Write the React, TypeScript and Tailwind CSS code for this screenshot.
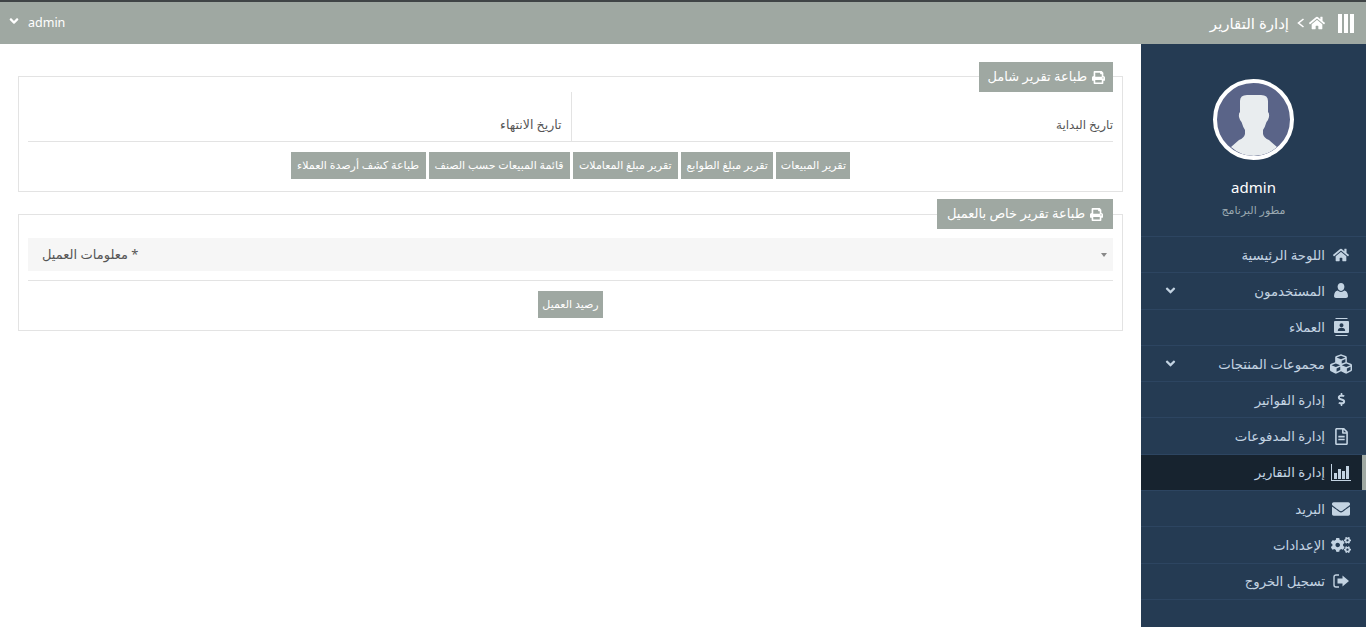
import { FaHome, FaCubes, FaDollarSign, FaRegFileAlt, FaEnvelope, FaCogs, FaPrint, FaAngleDown } from "react-icons/fa";

function UserIcon() {
  return (
    <svg viewBox="0 0 14 15" className="h-[15px] w-[14px]" fill="currentColor">
      <path d="M7 0c2 0 3.400 1.600 3.400 3.800S9 8 7 8 3.600 6 3.600 3.800 5 0 7 0z" />
      <path d="M3.800 7.600C4.600 8.500 5.700 9 7 9s2.400-.5 3.200-1.400c2.200.3 3.600 2 3.800 5.400 0 1.300-.8 2-2 2H2c-1.200 0-2-.7-2-2 .2-3.400 1.600-5.100 3.800-5.400z" />
    </svg>
  );
}

function ContactIcon() {
  return (
    <svg viewBox="0 0 15 18" className="h-[18px] w-[15px]" fill="currentColor">
      <rect x="1.500" y="0" width="12" height="1" />
      <rect x="1.500" y="17" width="12" height="1" />
      <path d="M1 3h13a1 1 0 0 1 1 1v10a1 1 0 0 1-1 1H1a1 1 0 0 1-1-1V4a1 1 0 0 1 1-1zm6.500 2.200a2 2 0 1 0 0 4 2 2 0 0 0 0-4zM3.800 13h7.400c0-2-1.400-3.200-3.700-3.200S3.800 11 3.800 13z" fillRule="evenodd" />
    </svg>
  );
}

function ChartIcon() {
  return (
    <svg viewBox="0 0 20 17" className="h-[17px] w-[20px]" fill="currentColor">
      <rect x="0" y="0" width="1" height="17" />
      <rect x="0" y="16" width="20" height="1" />
      <rect x="3" y="9" width="3" height="6" />
      <rect x="7" y="5" width="3" height="10" />
      <rect x="11" y="7" width="3" height="8" />
      <rect x="15" y="2" width="3" height="13" />
    </svg>
  );
}

function LogoutIcon() {
  return (
    <svg viewBox="0 0 16 14" className="h-[14px] w-[16px]" fill="currentColor">
      <path d="M6 1H3a2 2 0 0 0-2 2v8a2 2 0 0 0 2 2h3" fill="none" stroke="currentColor" strokeWidth="1.400" />
      <path d="M9.500 1.500 16 7l-6.500 5.500V9.500H4.500v-5h5z" />
    </svg>
  );
}

function BarsIcon() {
  return (
    <div className="flex h-[19px] gap-[2px]">
      <span className="w-[4px] bg-white" />
      <span className="w-[4px] bg-white" />
      <span className="w-[4px] bg-white" />
    </div>
  );
}

function CrumbArrow() {
  return (
    <svg viewBox="0 0 8 10" className="mr-[4px] h-[10px] w-[8px]" fill="none" stroke="currentColor" strokeWidth="1.600">
      <path d="M6.500 1 1.500 5 6.500 9" />
    </svg>
  );
}

const menu = [
  { label: "اللوحة الرئيسية", icon: <FaHome size={16} /> },
  { label: "المستخدمون", icon: <UserIcon />, arrow: true },
  { label: "العملاء", icon: <ContactIcon /> },
  { label: "مجموعات المنتجات", icon: <FaCubes size={22} />, arrow: true },
  { label: "إدارة الفواتير", icon: <FaDollarSign size={13} /> },
  { label: "إدارة المدفوعات", icon: <FaRegFileAlt size={17} /> },
  { label: "إدارة التقارير", icon: <ChartIcon />, active: true },
  { label: "البريد", icon: <FaEnvelope size={18} /> },
  { label: "الإعدادات", icon: <FaCogs size={20} /> },
  { label: "تسجيل الخروج", icon: <LogoutIcon /> },
];

const reportButtons = [
  { label: "تقرير المبيعات", padding: "px-[4.500px]" },
  { label: "تقرير مبلغ الطوابع", padding: "px-[5.500px]" },
  { label: "تقرير مبلغ المعاملات", padding: "px-[6.500px]" },
  { label: "قائمة المبيعات حسب الصنف", padding: "px-[6px]" },
  { label: "طباعة كشف أرصدة العملاء", padding: "px-[6.500px]" },
];

function Legend({ title, className }: { title: string; className: string }) {
  return (
    <div className={`mr-[9px] flex h-[30px] w-fit items-center gap-[5px] bg-[#9fa8a2] text-[13px] text-white ${className}`}>
      <FaPrint size={13} />
      <span>{title}</span>
    </div>
  );
}

function ActionButton({ label, padding }: { label: string; padding: string }) {
  return <button className={`h-[27px] bg-[#9fa8a2] text-[11px] whitespace-nowrap text-white ${padding}`}>{label}</button>;
}

function Avatar() {
  return (
    <div className="h-[81px] w-[81px] overflow-hidden rounded-full border-[4px] border-white bg-[#5a6488]">
      <svg viewBox="0 0 73 73" className="h-full w-full">
        <path
          d="M23 18Q23 12 30 12H44Q51 12 51 18V29Q52.500 30 52 34Q51 38 49.500 39Q48 44 46 47V51Q47 55 52 57L60 64Q50 73 37 73Q24 73 14 64L22 57Q27 55 28 51V47Q26 44 24.500 39Q23 38 22 34Q21.500 30 23 29Z"
          fill="#e9edef"
        />
      </svg>
    </div>
  );
}

export default function App() {
  return (
    <div dir="rtl" className="flex h-screen flex-col overflow-hidden bg-white font-['Noto_Sans','DejaVu_Sans',sans-serif]">
      {/* Top bar */}
      <header className="flex h-[44px] shrink-0 items-center justify-between border-t-2 border-[#3f4446] bg-[#9fa8a2] pr-[12px] pl-[7px] text-white">
        <div className="flex items-center">
          <BarsIcon />
          <span className="mr-[13px]">
            <FaHome size={16} />
          </span>
          <CrumbArrow />
          <span className="mr-[8px] text-[15px]">إدارة التقارير</span>
        </div>
        <div className="flex items-center gap-[7px] text-[12.500px]">
          <span>admin</span>
          <FaAngleDown size={14} className="-mt-[5px]" />
        </div>
      </header>

      <div className="flex min-h-0 flex-1">
        {/* Sidebar */}
        <aside className="w-[225px] shrink-0 bg-[#253b53]">
          <div className="flex h-[193px] flex-col items-center border-b border-[#2d4561] pt-[35px]">
            <Avatar />
            <div className="mt-[17px] text-[15px] leading-5 text-white">admin</div>
            <div className="mt-[3px] text-[11px] leading-5 text-[#9aa8b0]">مطور البرنامج</div>
          </div>
          <nav>
            {menu.map((item) => (
              <div
                key={item.label}
                className={`relative flex h-[36.300px] items-center border-b border-[#2d4561] pr-[12px] pl-[22px] text-[13.300px] text-[#c3d3e2] ${item.active ? "bg-[#17232f]" : ""}`}
              >
                <span className="flex w-[26px] shrink-0 justify-center">{item.icon}</span>
                <span className="mr-[3px] pt-[2px]">{item.label}</span>
                {item.arrow && <FaAngleDown size={15} className="mr-auto" />}
                {item.active && <span className="absolute top-0 right-0 bottom-0 w-[4px] bg-[#9fa8a2]" />}
              </div>
            ))}
          </nav>
        </aside>

        {/* Main */}
        <main className="flex-1 pt-[32px] pr-[18px] pl-[18px]">
          <section className="h-[116px] border border-[#e3e3e3]">
            <Legend title="طباعة تقرير شامل" className="-mt-[15px] px-[8px]" />
            <div className="mx-[9px] flex h-[50px] border-b border-[#e3e3e3] text-[12.500px] text-[#555]">
              <div className="flex w-1/2 items-end border-l border-[#e3e3e3] pb-[7px] text-[12px]">تاريخ البداية</div>
              <div className="flex w-1/2 items-end pr-[9px] pb-[6px]">تاريخ الانتهاء</div>
            </div>
            <div className="mt-[10px] flex justify-center gap-[3px]">
              {reportButtons.map((b) => (
                <ActionButton key={b.label} label={b.label} padding={b.padding} />
              ))}
            </div>
          </section>

          <section className="mt-[22px] h-[117px] border border-[#e3e3e3]">
            <Legend title="طباعة تقرير خاص بالعميل" className="-mt-[16px] px-[10px]" />
            <div className="mx-[9px] mt-[9px] border-b border-[#e3e3e3] pb-[9px]">
              <div className="flex h-[33px] items-center justify-between bg-[#f6f6f6] pr-[6px] pl-[14px] text-[13px] text-[#555]">
                <span className="h-0 w-0 border-x-[3.500px] border-t-[4px] border-x-transparent border-t-[#888]" />
                <span className="pt-[1px]">* معلومات العميل</span>
              </div>
            </div>
            <div className="mt-[10px] flex justify-center">
              <ActionButton label="رصيد العميل" padding="px-[4.500px]" />
            </div>
          </section>
        </main>
      </div>
    </div>
  );
}
